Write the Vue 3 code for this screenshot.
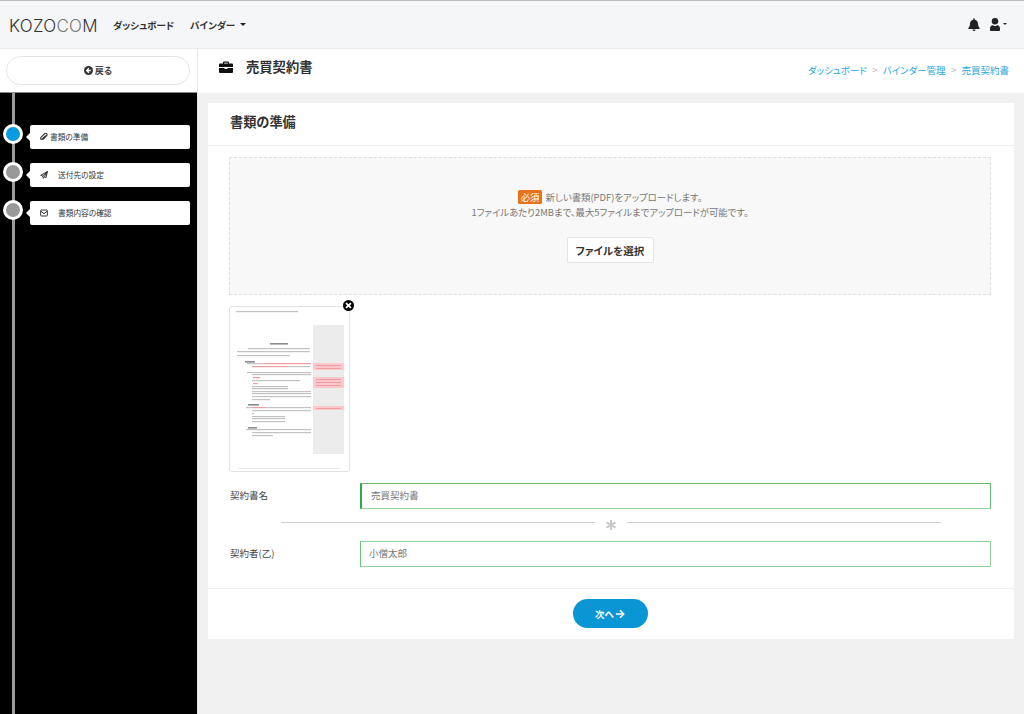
<script setup>
const steps = [
  { label: '書類の準備', icon: 'clip', active: true },
  { label: '送付先の設定', icon: 'plane', active: false },
  { label: '書類内容の確認', icon: 'check', active: false },
]
const crumbs = ['ダッシュボード', 'バインダー管理', '売買契約書']
// [y, x1, x2, kind] kind: 0 grey, 1 pink, 2 dark
const pageRows = [
  [311, 236, 298, 0], [343, 270, 288, 2],
  [348, 248, 310, 0], [351, 237, 310, 0], [355, 237, 290, 0],
  [361, 245, 255, 2], [363, 247, 264, 0], [363, 264, 311, 1], [366, 252, 287, 1], [366, 287, 310, 0],
  [372, 247, 311, 0], [374, 252, 311, 0], [377, 253, 260, 1], [380, 252, 300, 0], [383, 253, 258, 1],
  [386, 252, 288, 0], [388, 252, 288, 0], [391, 252, 311, 0], [393, 252, 311, 0], [396, 252, 311, 0], [399, 252, 270, 0],
  [404, 248, 259, 2], [407, 246, 252, 0], [407, 252, 265, 1], [407, 265, 311, 0], [410, 252, 311, 0], [413, 252, 254, 0],
  [416, 252, 285, 0], [418, 252, 285, 0], [421, 252, 285, 0],
  [427, 248, 257, 2], [429, 246, 311, 0], [432, 252, 311, 0], [435, 252, 273, 0],
]
const rowFill = ['#c2c2c2', '#f29ca1', '#8c8c8c']
const pinkBlocks = [
  { y: 363, h: 7 }, { y: 377, h: 11 }, { y: 406, h: 4 },
]
const noteLines = [365, 368, 379, 382, 385, 408]
</script>

<template>
  <div class="page">
    <header class="topbar">
      <div class="logo">KOZO<span class="logo-light">CO</span>M</div>
      <nav class="nav">
        <span>ダッシュボード</span>
        <span class="nav-drop">バインダー<i class="caret"></i></span>
      </nav>
      <div class="top-icons">
        <svg width="12" height="13" viewBox="0 0 24 26"><path fill="#222" d="M12 26a3 3 0 0 0 3-3H9a3 3 0 0 0 3 3zm11-6.500c-1-1-3-2.500-3-8.500 0-3.700-2.800-6.800-6.500-7.500V2a1.500 1.500 0 0 0-3 0v1.500C6.800 4.200 4 7.300 4 11c0 6-2 7.500-3 8.500-.3.300-.5.700-.5 1 0 .8.700 1.500 1.500 1.500h20c.8 0 1.500-.7 1.500-1.500 0-.3-.2-.7-.5-1z"/></svg>
        <span class="user">
          <svg width="10" height="13" viewBox="0 0 20 26"><circle cx="10" cy="6.500" r="6.500" fill="#222"/><path fill="#222" d="M2 26c-1 0-2-.8-2-2v-3c0-4 2.500-6.500 5-6.500 1.300 0 2.500 1.500 5 1.500s3.700-1.500 5-1.500c2.500 0 5 2.500 5 6.500v3c0 1.200-1 2-2 2z"/></svg>
          <i class="caret small"></i>
        </span>
      </div>
    </header>

    <div class="body">
      <aside class="side">
        <div class="back-wrap">
          <button class="back">
            <svg width="9" height="9" viewBox="0 0 24 24"><circle cx="12" cy="12" r="12" fill="#333"/><path d="M13 6l-6 6 6 6M7 12h11" fill="none" stroke="#fff" stroke-width="3.500"/></svg>
            戻る
          </button>
        </div>
        <div class="timeline">
          <div class="rail"></div>
          <div v-for="s in steps" :key="s.label" class="step">
            <span class="dot" :class="{ on: s.active }"></span>
            <div class="step-card" :class="{ first: s.active }">
              <svg v-if="s.icon === 'clip'" class="step-icon" viewBox="0 0 24 24"><path d="M8 20L20 8a4 4 0 0 0-6-6L3 13a3 3 0 0 0 4 5l10-10" fill="none" stroke="#333" stroke-width="3.500"/></svg>
              <svg v-else-if="s.icon === 'plane'" class="step-icon" viewBox="0 0 24 24"><path d="M22 2L2 13l6 2 2 7 3-5 5 3z M8 15L22 2 13 17" fill="none" stroke="#222" stroke-width="2.800" stroke-linejoin="round"/></svg>
              <svg v-else class="step-icon" viewBox="0 0 24 24"><rect x="2" y="3" width="20" height="18" rx="2" fill="none" stroke="#333" stroke-width="3"/><path d="M3 7l9 7 9-7" fill="none" stroke="#333" stroke-width="3"/></svg>
              <span>{{ s.label }}</span>
            </div>
          </div>
        </div>
      </aside>

      <main class="main">
        <div class="head">
          <h1>
            <svg width="14" height="12" viewBox="0 0 28 24"><path fill="#111" d="M10 1h8a2 2 0 0 1 2 2v2h6a2 2 0 0 1 2 2v5H0V7a2 2 0 0 1 2-2h6V3a2 2 0 0 1 2-2zm0 2.500V5h8V3.500zM0 14h11v2h6v-2h11v8a2 2 0 0 1-2 2H2a2 2 0 0 1-2-2z"/></svg>
            売買契約書
          </h1>
          <ol class="crumbs">
            <li v-for="c in crumbs" :key="c">{{ c }}</li>
          </ol>
        </div>

        <section class="card">
          <h2>書類の準備</h2>
          <div class="card-body">
            <div class="drop">
              <p class="drop-l1"><em>必須</em> 新しい書類(PDF)をアップロードします。</p>
              <p class="drop-l2">1ファイルあたり2MBまで、最大5ファイルまでアップロードが可能です。</p>
              <button class="file-btn">ファイルを選択</button>
            </div>

            <div class="thumb">
              <svg class="doc" viewBox="229 306 121 166" width="121" height="166">
                <rect x="313" y="325" width="31" height="129" fill="#ececec"/>
                <rect v-for="(b, i) in pinkBlocks" :key="'b' + i" x="313" :y="b.y" width="31" :height="b.h" fill="#fbc9cc"/>
                <rect v-for="(y, i) in noteLines" :key="'n' + i" x="316" :y="y" width="25" height="1" fill="#ee9da2"/>
                <rect v-for="(r, i) in pageRows" :key="'l' + i" :x="r[1]" :y="r[0]" :width="r[2] - r[1]" :height="r[3] === 2 ? 1.6 : 1.2" :fill="rowFill[r[3]]"/>
                <rect x="238" y="468" width="102" height="1" fill="#e8e8e8"/>
              </svg>
              <span class="close">
                <svg width="7" height="7" viewBox="0 0 10 10"><path d="M1.500 1.500l7 7m0-7l-7 7" stroke="#fff" stroke-width="2.600"/></svg>
              </span>
            </div>

            <div class="field">
              <label>契約書名</label>
              <div class="input strong"><span>売買契約書</span></div>
            </div>
            <div class="sep">
              <span class="rule"></span>
              <svg class="ast" width="32" height="12" viewBox="0 0 32 12"><path d="M16 1v10M11.500 3.400l9 5.200m0-5.200l-9 5.200" stroke="#c9c9c9" stroke-width="2" fill="none"/></svg>
              <span class="rule"></span>
            </div>
            <div class="field">
              <label>契約者(乙)</label>
              <div class="input"><span>小僧太郎</span></div>
            </div>
          </div>
          <div class="card-foot">
            <button class="next">次へ
              <svg width="10" height="10" viewBox="0 0 24 24"><path d="M12 3l9 9-9 9M21 12H2" fill="none" stroke="#fff" stroke-width="3.600"/></svg>
            </button>
          </div>
        </section>
      </main>
    </div>
  </div>
</template>

<style>
html, body { margin: 0; background: #fff; }
</style>

<style scoped>
.page {
  width: 1024px;
  height: 714px;
  overflow: hidden;
  display: flex;
  flex-direction: column;
  font-family: "Noto Sans CJK JP", "Noto Sans", sans-serif;
  font-feature-settings: "palt";
  color: #333;
}
button { font-feature-settings: "palt"; }
.topbar {
  height: 47px;
  flex: none;
  background: #f5f6f7;
  border-top: 1px solid #bdbdbd;
  border-bottom: 1px solid #e9e9e9;
  display: flex;
  align-items: center;
  padding: 0 17px 0 9px;
}
.logo {
  font-family: Inter, "Liberation Sans", sans-serif;
  font-size: 17px;
  font-weight: 300;
  letter-spacing: 0.300px;
  color: #333;
  width: 104px;
  padding-top: 3px;
  flex: none;
}
.logo-light { color: #777; }
.nav {
  display: flex;
  gap: 16px;
  font-size: 9.500px;
  font-weight: 700;
  color: #333;
}
.nav-drop { display: flex; align-items: center; }
.caret {
  display: inline-block;
  width: 0;
  height: 0;
  margin-left: 5px;
  border-left: 3px solid transparent;
  border-right: 3px solid transparent;
  border-top: 3px solid #222;
}
.caret.small { margin-left: 3px; border-left-width: 2.500px; border-right-width: 2.500px; border-top-width: 2.500px; margin-bottom: 1px; }
.top-icons { margin-left: auto; display: flex; align-items: center; gap: 10px; }
.user { display: flex; align-items: center; }

.body { flex: 1; display: flex; min-height: 0; }
.side {
  width: 197px;
  flex: none;
  display: flex;
  flex-direction: column;
  border-right: 1px solid #e6e6e6;
}
.back-wrap {
  height: 43px;
  flex: none;
  box-sizing: border-box;
  padding: 7px 7px 7px 6px;
  background: #fff;
}
.back {
  display: flex;
  align-items: center;
  justify-content: center;
  gap: 2px;
  width: 100%;
  height: 29px;
  box-sizing: border-box;
  border: 1px solid #e4e4e4;
  border-radius: 15px;
  background: #fff;
  font-family: "Noto Sans CJK JP", sans-serif;
  font-size: 9px;
  font-weight: 700;
  color: #444;
  padding: 0;
}
.timeline {
  flex: 1;
  position: relative;
  background: #000;
  border-top: 1px solid #888;
  padding-top: 32px;
  display: flex;
  flex-direction: column;
  gap: 14.500px;
}
.rail {
  position: absolute;
  left: 12px;
  top: 0;
  bottom: 0;
  width: 3px;
  background: #9b9b9b;
}
.step {
  display: flex;
  align-items: center;
  height: 23.500px;
  padding-left: 3px;
  position: relative;
}
.dot {
  width: 20px;
  height: 20px;
  box-sizing: border-box;
  border: 3px solid #fff;
  border-radius: 50%;
  background: #999;
  flex: none;
  margin-top: -6px;
}
.dot.on { background: #0a9ae0; }
.step-card {
  position: relative;
  margin-left: 7px;
  width: 160px;
  height: 100%;
  background: #fff;
  border-radius: 2px;
  display: flex;
  align-items: center;
  gap: 10px;
  padding-left: 10px;
  box-sizing: border-box;
  font-size: 7.700px;
  color: #333;
}
.step-card.first { gap: 2px; }
.step-card::before {
  content: "";
  position: absolute;
  left: -4px;
  top: 50%;
  margin-top: -4px;
  border-top: 4px solid transparent;
  border-bottom: 4px solid transparent;
  border-right: 4px solid #fff;
}
.step-icon { width: 8px; height: 8px; flex: none; }

.main {
  flex: 1;
  min-width: 0;
  background: #f1f1f1;
  display: flex;
  flex-direction: column;
}
.head {
  height: 44px;
  flex: none;
  background: #fff;
  display: flex;
  align-items: center;
  justify-content: space-between;
  padding: 0 15px 9px 21px;
  box-sizing: border-box;
}
h1 {
  margin: 0;
  display: flex;
  align-items: center;
  gap: 13px;
  font-size: 13.300px;
  font-weight: 700;
  color: #333;
}
.crumbs {
  list-style: none;
  margin: 7px 0 0;
  padding: 0;
  display: flex;
  font-size: 9.500px;
  color: #2aa7dc;
}
.crumbs li + li::before {
  content: ">";
  color: #b5b5b5;
  margin: 0 5.300px;
}
.card {
  margin: 10px 10px 0;
  background: #fff;
  height: 536px;
  display: flex;
  flex-direction: column;
}
h2 {
  margin: 0;
  height: 43px;
  flex: none;
  box-sizing: border-box;
  padding: 0 22px 6px;
  border-bottom: 1px solid #eee;
  display: flex;
  align-items: center;
  font-size: 13.200px;
  font-weight: 700;
  color: #333;
}
.card-body { flex: 1; padding: 11px 23px 0 21px; }
.drop {
  height: 138px;
  box-sizing: border-box;
  background: #f8f8f8;
  border: 1px dashed #e0e0e0;
  display: flex;
  flex-direction: column;
  align-items: center;
  padding-top: 32px;
  font-size: 9.400px;
  color: #777;
}
.drop p { margin: 0; line-height: 15px; }
.drop em {
  font-style: normal;
  display: inline-block;
  background: #e8711c;
  color: #fff;
  border-radius: 1.500px;
  padding: 0 3px;
  line-height: 14px;
  margin-right: 1px;
}
.file-btn {
  margin-top: 17px;
  height: 26px;
  width: 87px;
  padding: 0;
  background: #fff;
  border: 1px solid #e4e4e4;
  border-radius: 2px;
  font-family: "Noto Sans CJK JP", sans-serif;
  font-size: 10.500px;
  font-weight: 700;
  color: #333;
}
.thumb {
  position: relative;
  width: 121px;
  height: 166px;
  margin-top: 11px;
  box-sizing: border-box;
  border: 1px solid #e2e2e2;
  border-radius: 3px;
  background: #fff;
}
.doc { display: block; margin: -1px; }
.close {
  position: absolute;
  right: -5px;
  top: -7px;
  width: 11px;
  height: 11px;
  border-radius: 50%;
  background: #000;
  display: flex;
  align-items: center;
  justify-content: center;
}
.field { display: flex; align-items: center; height: 26px; }
.thumb + .field { margin-top: 11px; }
.field label { width: 131px; flex: none; font-size: 9.500px; color: #444; padding: 0 0 3px 1px; box-sizing: border-box; }
.input {
  flex: 1;
  height: 26px;
  box-sizing: border-box;
  border: 1px solid #8fd09b;
  border-left-color: #6cc47c;
  padding: 0 0 2px 8px;
  display: flex;
  align-items: center;
  font-size: 9.500px;
  color: #777;
}
.input.strong { border-left: 2px solid #2fa84a; border-top-color: #62bb70; border-right-color: #62bb70; padding-left: 9px; }
.sep {
  height: 32px;
  display: flex;
  align-items: flex-start;
  padding: 0 50px 0 52px;
}
.rule { flex: 1; height: 1px; background: #d0d0d0; margin-top: 13px; }
.ast { flex: none; margin-top: 10px; }
.card-foot {
  height: 51px;
  flex: none;
  border-top: 1px solid #eee;
  display: flex;
  justify-content: center;
  padding: 10px 2px 0 0;
  box-sizing: border-box;
}
.next {
  width: 75px;
  height: 29px;
  border: 0;
  border-radius: 15px;
  background: #0a96d4;
  color: #fff;
  font-family: "Noto Sans CJK JP", sans-serif;
  font-size: 9.500px;
  font-weight: 700;
  display: flex;
  align-items: center;
  justify-content: center;
  gap: 1px;
  padding: 0;
}
</style>
